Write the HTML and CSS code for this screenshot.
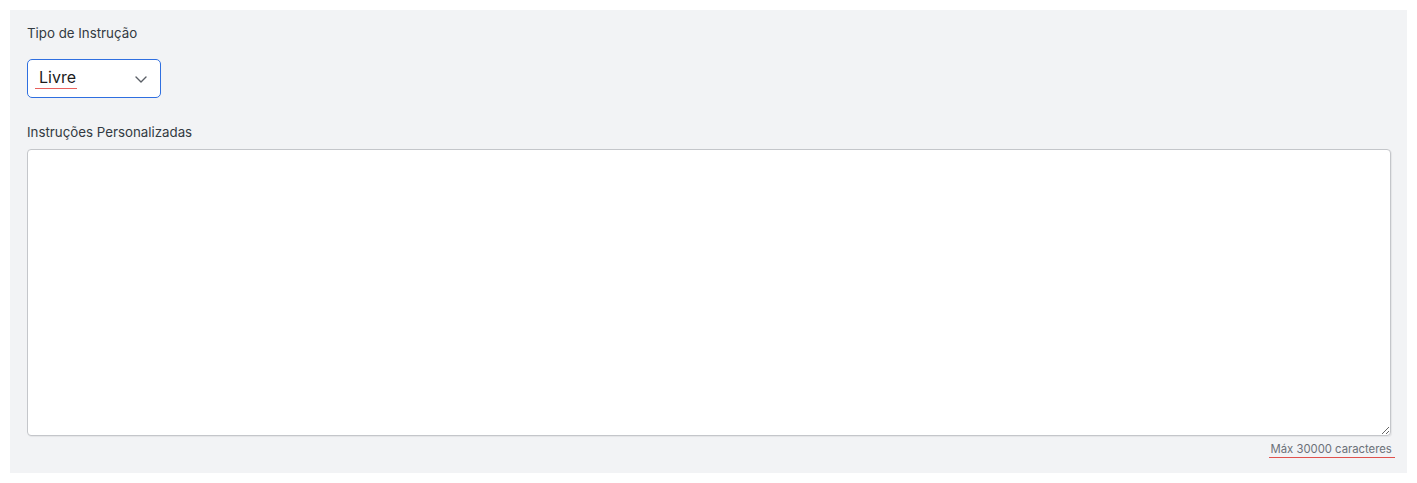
FILE: index.html
```html
<!DOCTYPE html>
<html lang="pt-BR">
<head>
    <meta charset="UTF-8">
    <title>Instruções</title>
    <link rel="stylesheet" href="styles.css">
</head>
<body>
    <!-- Instruction settings panel -->
    <div class="panel">
        <label class="field-label">Tipo de Instrução</label>
        <div class="select-box">
            <span class="select-value">Livre</span>
            <svg class="chevron" width="14" height="14" viewBox="0 0 14 14">
                <path d="M2 5 L7 10 L12 5" fill="none" stroke="#5a5f66" stroke-width="1.4" stroke-linecap="round" stroke-linejoin="round"/>
            </svg>
        </div>

        <label class="field-label second">Instruções Personalizadas</label>
        <textarea class="instructions" spellcheck="false"></textarea>
        <div class="counter"><span class="counter-text">Máx 30000 caracteres&nbsp;</span></div>
    </div>
</body>
</html>
```

FILE: styles.css
```css
/* Page */
body {
    margin: 0;
    padding: 10px;
    background: #ffffff;
    font-family: Inter, 'Noto Sans', sans-serif;
}

/* Grey panel */
.panel {
    background-color: #f2f3f5;
    padding: 16px 16px 15px 17px;
    display: flex;
    flex-direction: column;
    align-items: flex-start;
}

.field-label {
    font-size: 13.3px;
    color: #333a42;
    line-height: 15px;
}

.field-label.second {
    margin-top: 27px;
}

/* Select box */
.select-box {
    margin-top: 18px;
    width: 134px;
    height: 39px;
    box-sizing: border-box;
    border: 1px solid #2f6fe0;
    border-radius: 5px;
    background: #ffffff;
    display: flex;
    align-items: center;
    justify-content: space-between;
    padding: 0 12px 0 11px;
}

.select-value {
    font-size: 16px;
    line-height: 19px;
    color: #1c1c1c;
    padding: 0 1px 1px 4px;
    margin-left: -4px;
    border-bottom: 1px solid #e8605c;
}

.chevron {
    display: block;
}

/* Text area */
.instructions {
    margin-top: 9px;
    width: 100%;
    height: 287px;
    box-sizing: border-box;
    border: 1px solid #c4c6ca;
    border-radius: 4px;
    background: #ffffff;
    box-shadow: 1px 1px 1px rgba(0, 0, 0, 0.06);
    resize: vertical;
    font-family: inherit;
    outline: none;
}

.counter {
    align-self: flex-end;
    margin-top: 1px;
    margin-right: -4px;
}

.counter-text {
    display: inline-block;
    font-size: 11.3px;
    color: #6b7078;
    line-height: 13px;
    padding: 0 0 1px 2px;
    border-bottom: 1px solid #e0524e;
}
```
